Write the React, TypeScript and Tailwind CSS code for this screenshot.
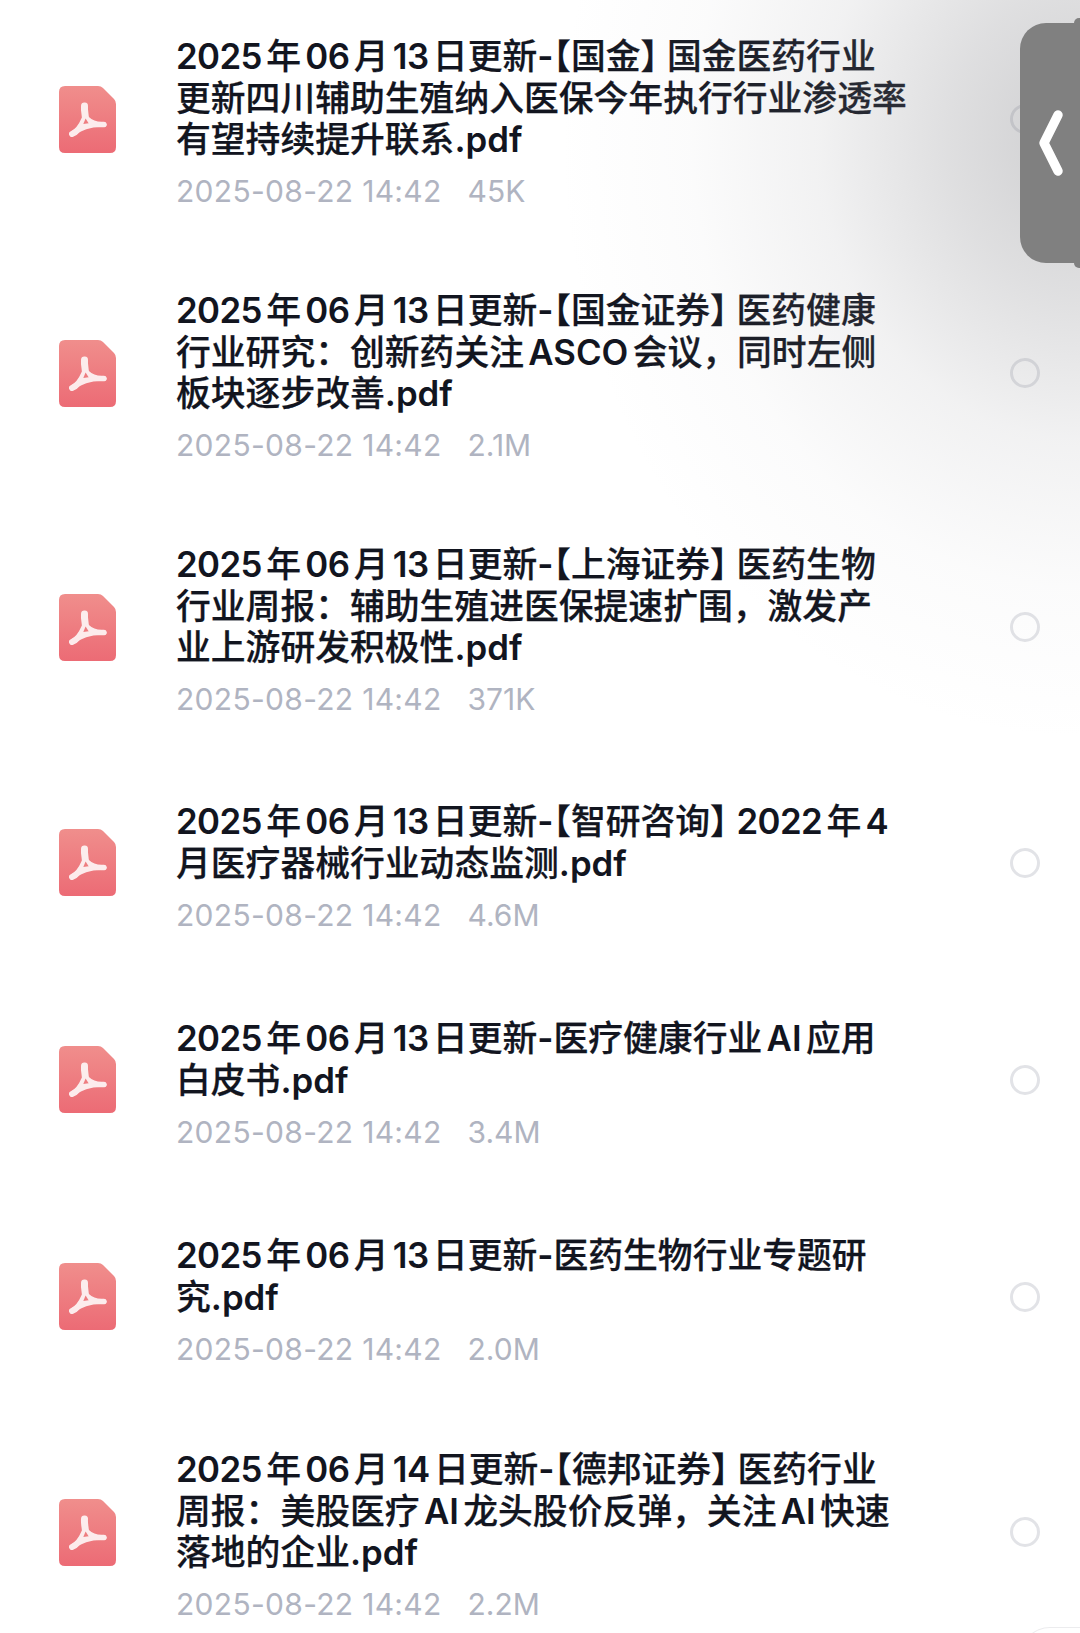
import React from "react";

type FileEntry = { lines: string[]; size: string };

const files: FileEntry[] = [
  {
    lines: [
      "2025年06月13日更新-【国金】国金医药行业",
      "更新四川辅助生殖纳入医保今年执行行业渗透率",
      "有望持续提升联系.pdf",
    ],
    size: "45K",
  },
  {
    lines: [
      "2025年06月13日更新-【国金证券】医药健康",
      "行业研究：创新药关注ASCO会议，同时左侧",
      "板块逐步改善.pdf",
    ],
    size: "2.1M",
  },
  {
    lines: [
      "2025年06月13日更新-【上海证券】医药生物",
      "行业周报：辅助生殖进医保提速扩围，激发产",
      "业上游研发积极性.pdf",
    ],
    size: "371K",
  },
  {
    lines: ["2025年06月13日更新-【智研咨询】2022年4", "月医疗器械行业动态监测.pdf"],
    size: "4.6M",
  },
  {
    lines: ["2025年06月13日更新-医疗健康行业AI应用", "白皮书.pdf"],
    size: "3.4M",
  },
  {
    lines: ["2025年06月13日更新-医药生物行业专题研", "究.pdf"],
    size: "2.0M",
  },
  {
    lines: [
      "2025年06月14日更新-【德邦证券】医药行业",
      "周报：美股医疗AI龙头股价反弹，关注AI快速",
      "落地的企业.pdf",
    ],
    size: "2.2M",
  },
];

function PdfIcon() {
  return (
    <svg width="57" height="67" viewBox="0 0 57 67" className="shrink-0">
      <defs>
        <linearGradient id="pdf-fill" x1="0" y1="0" x2="0" y2="1">
          <stop offset="0" stopColor="#f08e8c" />
          <stop offset="1" stopColor="#ec6b75" />
        </linearGradient>
      </defs>
      <path
        d="M6 0H39Q42 0 44 2L55 13Q57 15 57 18V61Q57 67 51 67H6Q0 67 0 61V6Q0 0 6 0Z"
        fill="url(#pdf-fill)"
      />
      <g fill="none" stroke="#fff" strokeLinecap="round" strokeLinejoin="round" opacity="0.86">
        <path d="M25.5 20C25 26 27 30 26.5 36" strokeWidth="7" />
        <path d="M13 48C18 46 22 41 25.5 33" strokeWidth="6" />
        <path d="M45 38.5C39 39 33 38 28 33" strokeWidth="5.5" />
        <path d="M13 48C22 41 34 38 45 38.5" strokeWidth="5" />
      </g>
      <path d="M26.6 32.5L24.3 38L29.6 37.2Z" fill="#ee7d80" />
    </svg>
  );
}

// Latin runs take a heavier weight than the CJK face and digits sit a touch tighter.
// Both brackets use the half-width form; the closing one keeps some room after it.
function TitleLine({ text }: { text: string }) {
  const parts = text.split(/([A-Za-z0-9.\-]+|【|】)/).filter(Boolean);
  return (
    <div>
      {parts.map((part, i) => {
        if (part === "【") {
          return (
            <span key={i} className="[font-feature-settings:'halt'] [-webkit-text-stroke:0.25px_#12151f]">
              {part}
            </span>
          );
        }
        if (part === "】") {
          return (
            <span key={i} className="mr-[9px] [font-feature-settings:'halt'] [-webkit-text-stroke:0.25px_#12151f]">
              {part}
            </span>
          );
        }
        if (/^[0-9]+$/.test(part)) {
          return (
            <span key={i} className="font-semibold tracking-[-0.6px]">
              {part}
            </span>
          );
        }
        if (/^[A-Za-z0-9.\-]+$/.test(part)) {
          return (
            <span key={i} className="font-semibold">
              {part}
            </span>
          );
        }
        return (
          <span key={i} className="[-webkit-text-stroke:0.25px_#12151f]">
            {part}
          </span>
        );
      })}
    </div>
  );
}

function FileRow({ file }: { file: FileEntry }) {
  const isTall = file.lines.length === 3;
  return (
    <li className={`flex items-center pl-[59px] pr-[40px] ${isTall ? "h-[254px]" : "h-[217px]"}`}>
      <PdfIcon />
      <div className={`ml-[60px] min-w-0 flex-1 ${isTall ? "pt-[10px]" : "pt-[12px]"}`}>
        <div className="text-[34.8px] font-medium leading-[41.7px] text-[#12151f] whitespace-nowrap [text-autospace:normal]">
          {file.lines.map((line) => (
            <TitleLine key={line} text={line} />
          ))}
        </div>
        <div className="mt-[9px] flex text-[30px] leading-[42px] text-[#b0b4c1] whitespace-nowrap">
          <span className="tracking-[0.3px]">2025-08-22 14:42</span>
          <span className="ml-[26px]">{file.size}</span>
        </div>
      </div>
      <span className="h-[30px] w-[30px] shrink-0 rounded-full border-[3.5px] border-[#e2e3e7]" />
    </li>
  );
}

export default function App() {
  return (
    <div
      className="relative h-[1633px] w-[1080px] overflow-hidden bg-white"
      style={{ fontFamily: 'Inter, "Noto Sans CJK SC", sans-serif' }}
    >
      <ul className="-mt-[8px]">
        {files.map((file) => (
          <FileRow key={file.lines[0]} file={file} />
        ))}
      </ul>

      {/* Soft shadow cast by the edge drawer */}
      <div className="pointer-events-none absolute inset-0 bg-[radial-gradient(ellipse_520px_600px_at_100%_140px,rgba(120,120,125,0.36)_0%,rgba(130,130,135,0.26)_25%,rgba(150,150,155,0.13)_50%,rgba(180,180,185,0.05)_75%,rgba(255,255,255,0)_100%)]" />

      {/* Drawer handle */}
      <div className="absolute right-0 top-[18px] h-[250px] w-[6px] rounded-l-[5px] bg-[#808080]" />
      <div className="absolute right-0 top-[23px] flex h-[240px] w-[60px] items-center rounded-l-[26px] bg-[#808080]">
        <svg width="60" height="240" viewBox="0 0 60 240" className="block">
          <polyline
            points="38,92 24,120 38,148"
            fill="none"
            stroke="#fff"
            strokeWidth="9.5"
            strokeLinecap="round"
            strokeLinejoin="round"
          />
        </svg>
      </div>

      {/* Edge of the sheet peeking in at the bottom corner */}
      <div className="absolute -bottom-[30px] -right-[10px] h-[36px] w-[70px] rounded-tl-[30px] border-l border-t border-[#ececee]" />
    </div>
  );
}
